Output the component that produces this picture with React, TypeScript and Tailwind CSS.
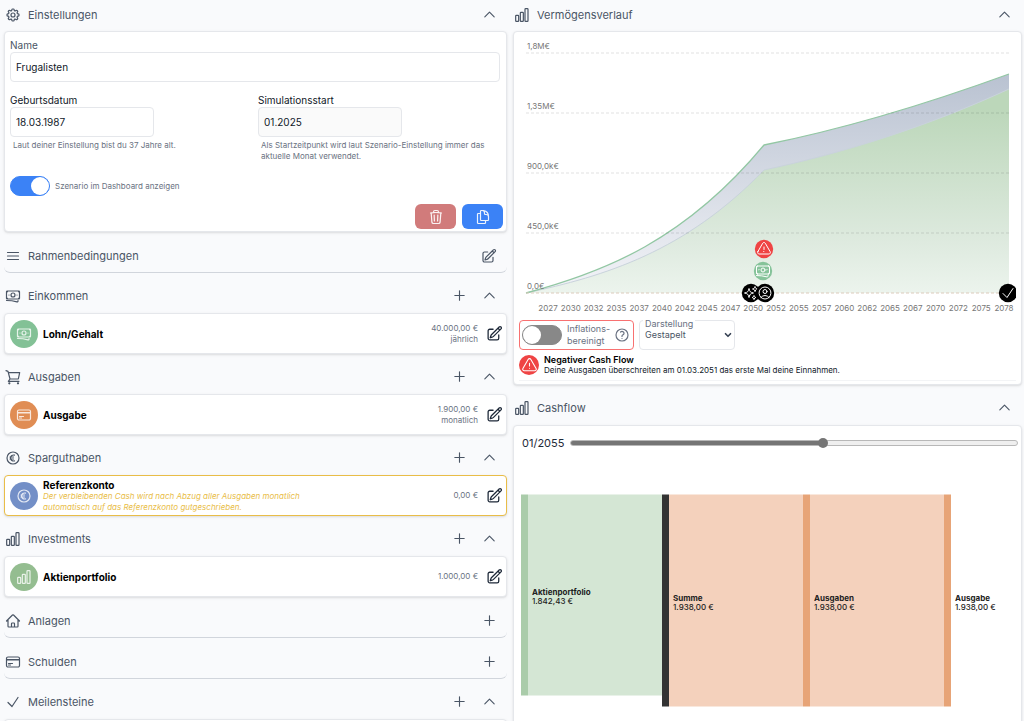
import type { ReactNode } from 'react'
import type { IconBaseProps, IconType } from 'react-icons'
import {
  HiOutlineBanknotes, HiOutlineBars3, HiOutlineCheck, HiOutlineChevronUp, HiOutlineCog8Tooth,
  HiOutlineCreditCard, HiOutlineCurrencyEuro, HiOutlineDocumentDuplicate, HiOutlineExclamationTriangle, HiOutlineHome,
  HiOutlinePencilSquare, HiOutlinePlus, HiOutlineQuestionMarkCircle, HiOutlineSparkles,
  HiOutlineTrash, HiOutlineUserCircle,
} from 'react-icons/hi2'
import { ChevronDown } from 'lucide-react'

const years = [
  2027, 2030, 2032, 2035, 2037, 2040, 2042, 2045, 2047, 2050, 2052,
  2055, 2057, 2060, 2062, 2065, 2067, 2070, 2072, 2075, 2078,
]

const gridLines = [
  { label: '1,8M€', y: 21 },
  { label: '1,35M€', y: 81 },
  { label: '900,0k€', y: 141 },
  { label: '450,0k€', y: 201 },
  { label: '0,0€', y: 261 },
]

const totalLine = 'M7 261 C86 240 166 208 245 113 C320 98 405 73 490 42'
const stockLine = 'M7 261 C86 244 166 220 245 138 C325 121 410 94 490 57'

const milestones = [
  { icon: HiOutlineExclamationTriangle, x: 245, y: 217, fill: '#ef4444' },
  { icon: HiOutlineBanknotes, x: 244, y: 239, fill: '#86c39a' },
  { icon: HiOutlineSparkles, x: 232, y: 261, fill: '#000000' },
  { icon: HiOutlineUserCircle, x: 246, y: 261, fill: '#000000' },
  { icon: HiOutlineCheck, x: 489, y: 261, fill: '#000000' },
]

const cashflowNodes = [
  { name: 'Aktienportfolio', value: '1.842,43 €', x: 2, height: 201, color: '#aaccaa', link: '#d4e6d4' },
  { name: 'Summe', value: '1.938,00 €', x: 143, height: 212, color: '#333333', link: '#f4d1bc' },
  { name: 'Ausgaben', value: '1.938,00 €', x: 284, height: 212, color: '#e7a477', link: '#f4d1bc' },
  { name: 'Ausgabe', value: '1.938,00 €', x: 425, height: 212, color: '#e7a477', link: null },
]

function ChartBars({ size = 16, strokeWidth = 1.8, className }: IconBaseProps) {
  return (
    <svg viewBox="0 0 24 24" width={size} height={size} fill="none" stroke="currentColor" strokeWidth={strokeWidth} className={className} aria-hidden="true">
      <rect x="2.5" y="12.5" width="4.5" height="9" rx="1" />
      <rect x="9.5" y="8" width="4.5" height="13.5" rx="1" />
      <rect x="16.5" y="2.5" width="4.5" height="19" rx="1" />
    </svg>
  )
}

function Cart({ size = 16, strokeWidth = 1.8, className }: IconBaseProps) {
  return (
    <svg
      viewBox="0 0 24 24" width={size} height={size} fill="none" stroke="currentColor" strokeWidth={strokeWidth}
      strokeLinecap="round" strokeLinejoin="round" className={className} aria-hidden="true"
    >
      <path d="M1.5 2.5 4.5 3.5 7.5 15H20l2-9.5H5M7.5 15 5 18.5h16" />
      <circle cx="6.5" cy="21.5" r="0.8" fill="currentColor" />
      <circle cx="19.5" cy="21.5" r="0.8" fill="currentColor" />
    </svg>
  )
}

type SectionProps = {
  icon: IconType
  title: string
  first?: boolean
  add?: boolean
  edit?: boolean
  children?: ReactNode
}

function Section({ icon: Icon, title, first, add, edit, children }: SectionProps) {
  return (
    <section>
      <div
        className={`flex items-center pl-px pr-2.5 text-gray-600 ${first ? 'h-[31px] pb-0.5' : children ? 'h-[33px] pb-0.5' : 'h-[34px] rounded-md border-b border-gray-300'}`}
      >
        <Icon size={16} strokeWidth={1.8} className="shrink-0" />
        <h2 className="ml-[7px] flex-1 pt-0.5 text-[11px]">{title}</h2>
        <div className="flex items-center gap-[15px]">
          {add && <button type="button" aria-label={`${title} hinzufügen`}><HiOutlinePlus size={15} strokeWidth={1.8} /></button>}
          {edit && <button type="button" aria-label={`${title} bearbeiten`}><HiOutlinePencilSquare size={16} strokeWidth={1.8} /></button>}
          {children && <button type="button" aria-label={`${title} einklappen`}><HiOutlineChevronUp size={15} strokeWidth={1.8} /></button>}
        </div>
      </div>
      {children}
    </section>
  )
}

type ItemProps = {
  icon: IconType
  circle: string
  title: string
  note?: string
  amount: string
  interval?: string
}

function Item({ icon: Icon, circle, title, note, amount, interval }: ItemProps) {
  return (
    <div
      className={`flex h-[41px] items-center rounded border bg-white pl-[5px] pr-[3px] shadow ${note ? 'border-[#e9bd48]' : 'border-gray-200'}`}
    >
      <span className={`flex size-7 shrink-0 items-center justify-center rounded-full text-white/80 ${circle}`}>
        <Icon size={16} strokeWidth={1.8} />
      </span>
      <div className="ml-[5px] flex-1">
        <h3 className="text-[10px] leading-3 font-bold text-black">{title}</h3>
        {note && <p className="max-w-72 text-[8px] leading-[11px] text-[#e9bd48] italic">{note}</p>}
      </div>
      <div className="mr-2 text-right text-[8px] leading-[11px] text-gray-500">
        <p>{amount}</p>
        {interval && <p>{interval}</p>}
      </div>
      <button type="button" aria-label={`${title} bearbeiten`} className="text-gray-800">
        <HiOutlinePencilSquare size={17} strokeWidth={1.8} />
      </button>
    </div>
  )
}

function Switch({ id, checked }: { id: string; checked?: boolean }) {
  return (
    <input
      id={id}
      type="checkbox"
      role="switch"
      defaultChecked={checked}
      className="h-5 w-10 shrink-0 appearance-none rounded-full border border-[#888888] bg-[#888888] before:block before:size-[18px] before:rounded-full before:bg-white checked:border-[#3b82f6] checked:bg-[#3b82f6] checked:before:ml-5"
    />
  )
}

function SettingsForm() {
  const inputClass = 'block h-[30px] rounded border border-gray-200 px-[5px] text-[10px] text-gray-900'
  return (
    <form className="rounded border border-gray-200 bg-white pt-1.5 pb-0.5 pl-[5px] text-[10px] text-gray-900 shadow">
      <label htmlFor="name" className="block leading-[14px] text-gray-600">Name</label>
      <div className="pr-1.5">
        <input id="name" defaultValue="Frugalisten" className={`${inputClass} w-full bg-white`} />
      </div>
      <div className="mt-[11px] grid grid-cols-2">
        <div>
          <label htmlFor="birthday" className="block leading-[14px]">Geburtsdatum</label>
          <input id="birthday" defaultValue="18.03.1987" className={`${inputClass} w-36 bg-white`} />
          <p className="mt-[3px] ml-[3px] text-[8px] leading-[11px] text-gray-500">Laut deiner Einstellung bist du 37 Jahre alt.</p>
        </div>
        <div>
          <label htmlFor="start" className="block leading-[14px]">Simulationsstart</label>
          <input id="start" readOnly defaultValue="01.2025" className={`${inputClass} w-36 bg-neutral-50`} />
          <p className="mt-[3px] mr-2 ml-[3px] text-[8px] leading-[11px] text-gray-500">
            Als Startzeitpunkt wird laut Szenario-Einstellung immer das aktuelle Monat verwendet.
          </p>
        </div>
      </div>
      <div className="mt-3.5 flex items-center gap-[5px]">
        <Switch id="dashboard" checked />
        <label htmlFor="dashboard" className="text-[8px] text-gray-500">Szenario im Dashboard anzeigen</label>
      </div>
      <div className="mt-2 flex justify-end gap-1.5 pr-[3px] text-white/90">
        <button type="button" aria-label="Löschen" className="flex h-[25px] w-[41px] items-center justify-center rounded-md bg-[#d17b7b]">
          <HiOutlineTrash size={16} strokeWidth={1.8} />
        </button>
        <button type="button" aria-label="Duplizieren" className="flex h-[25px] w-[41px] items-center justify-center rounded-md bg-[#3b82f6]">
          <HiOutlineDocumentDuplicate size={16} strokeWidth={1.8} />
        </button>
      </div>
    </form>
  )
}

function WealthChart() {
  return (
    <svg viewBox="0 0 497 288" className="block w-full" role="img" aria-label="Vermögensverlauf">
      <defs>
        <linearGradient id="cash" x1="0" y1="0" x2="0" y2="1">
          <stop offset="0" stopColor="#b9c2d1" />
          <stop offset="1" stopColor="#f3f4f8" />
        </linearGradient>
        <linearGradient id="stock" x1="0" y1="0" x2="0" y2="1">
          <stop offset="0.1" stopColor="#bcd7ba" />
          <stop offset="0.75" stopColor="#deeadf" />
          <stop offset="1" stopColor="#ecf4ed" />
        </linearGradient>
      </defs>
      <path d={`${totalLine} V261 Z`} fill="url(#cash)" />
      <path d={`${stockLine} V261 Z`} fill="url(#stock)" />
      <path d={stockLine} fill="none" stroke="#c9d3dc" />
      <path d={totalLine} fill="none" stroke="#92c7a3" strokeWidth="1.3" />
      {gridLines.map((line) => (
        <g key={line.label}>
          <line x1="7" x2="490" y1={line.y} y2={line.y} stroke={line.y === 261 ? '#dccbbb' : '#000000'} strokeOpacity={line.y === 261 ? 1 : 0.12} strokeDasharray="3 2" />
          <text x="8" y={line.y - 4} fontSize="8" fill="#777777">{line.label}</text>
        </g>
      ))}
      {years.map((year, i) => (
        <text key={year} x={29 + i * 22.8} y="279" fontSize="8" textAnchor="middle" fill="#777777">{year}</text>
      ))}
      {milestones.map(({ icon: Icon, x, y, fill }) => (
        <g key={`${x}-${y}`} color="#ffffff">
          <circle cx={x} cy={y} r="9.2" fill={fill} />
          <Icon x={x - 8} y={y - 8} size={16} />
        </g>
      ))}
    </svg>
  )
}

function Cashflow() {
  return (
    <svg viewBox="0 0 497 270" className="block w-full" role="img" aria-label="Cashflow">
      {cashflowNodes.map((node) => (
        <g key={node.name}>
          {node.link && <rect x={node.x + 7} y="34.5" width="134" height={node.height} fill={node.link} />}
          <rect x={node.x} y="34.5" width="7" height={node.height} fill={node.color} />
          <text x={node.x + 11} y={34.5 + node.height / 2} fontSize="8" fill="#222222">
            <tspan fontWeight="700">{node.name}</tspan>
            <tspan x={node.x + 11} dy="9" fontWeight="500">{node.value}</tspan>
          </text>
        </g>
      ))}
    </svg>
  )
}

export default function App() {
  return (
    <main className="grid h-screen grid-cols-2 overflow-hidden bg-[#f9fafc] font-['Inter',sans-serif]">
      <div className="flex flex-col gap-[7px] pr-[5px] pl-1">
        <Section first icon={HiOutlineCog8Tooth} title="Einstellungen">
          <SettingsForm />
        </Section>
        <Section icon={HiOutlineBars3} title="Rahmenbedingungen" edit />
        <Section icon={HiOutlineBanknotes} title="Einkommen" add>
          <Item icon={HiOutlineBanknotes} circle="bg-[#83c196]" title="Lohn/Gehalt" amount="40.000,00 €" interval="jährlich" />
        </Section>
        <Section icon={Cart} title="Ausgaben" add>
          <Item icon={HiOutlineCreditCard} circle="bg-[#e08d54]" title="Ausgabe" amount="1.900,00 €" interval="monatlich" />
        </Section>
        <Section icon={HiOutlineCurrencyEuro} title="Sparguthaben" add>
          <Item
            icon={HiOutlineCurrencyEuro}
            circle="bg-[#738fc7]"
            title="Referenzkonto"
            note="Der verbleibenden Cash wird nach Abzug aller Ausgaben monatlich automatisch auf das Referenzkonto gutgeschrieben."
            amount="0,00 €"
          />
        </Section>
        <Section icon={ChartBars} title="Investments" add>
          <Item icon={ChartBars} circle="bg-[#94bd90]" title="Aktienportfolio" amount="1.000,00 €" />
        </Section>
        <Section icon={HiOutlineHome} title="Anlagen" add />
        <Section icon={HiOutlineCreditCard} title="Schulden" add />
        <Section icon={HiOutlineCheck} title="Meilensteine" add>
          <div className="h-10 rounded border border-gray-200 bg-white shadow" />
        </Section>
      </div>

      <div className="flex flex-col gap-[7px] pr-0.5 pl-px">
        <Section first icon={ChartBars} title="Vermögensverlauf">
          <div className="rounded border border-gray-200 bg-white px-[5px] pb-[3px] shadow">
            <WealthChart />
            <div className="flex gap-[5px] text-[9px] text-gray-500">
              <div className="flex h-[30px] items-center rounded border border-[#f87171] pr-[3px] pl-0.5">
                <Switch id="inflation" />
                <label htmlFor="inflation" className="ml-[5px] w-[47px] leading-3">Inflations-<br />bereinigt</label>
                <button type="button" aria-label="Hilfe"><HiOutlineQuestionMarkCircle size={16} strokeWidth={1.8} /></button>
              </div>
              <div className="relative">
                <label htmlFor="view" className="absolute -top-0.5 left-1 bg-white px-0.5 leading-3">Darstellung</label>
                <select id="view" className="h-[30px] w-24 appearance-none rounded border border-gray-200 bg-white pl-[5px] text-gray-600">
                  <option>Gestapelt</option>
                </select>
                <ChevronDown size={10} strokeWidth={4} className="pointer-events-none absolute top-2.5 right-0.5 text-gray-700" />
              </div>
            </div>
            <div className="mt-1 flex items-center gap-[5px] border-b border-gray-100 pb-1 text-[8px] leading-[11px] text-gray-900">
              <span className="flex size-5 items-center justify-center rounded-full bg-[#ef4444] text-white"><HiOutlineExclamationTriangle size={17} /></span>
              <div>
                <p className="text-[9px] font-semibold text-black">Negativer Cash Flow</p>
                <p>Deine Ausgaben überschreiten am 01.03.2051 das erste Mal deine Einnahmen.</p>
              </div>
            </div>
          </div>
        </Section>
        <Section icon={ChartBars} title="Cashflow">
          <div className="rounded border border-gray-200 bg-white shadow">
            <div className="flex h-[34px] items-center gap-1.5 pr-[3px] pl-2 text-[11px] text-gray-800">
              <label htmlFor="month">01/2055</label>
              <input
                id="month"
                type="range"
                min="0"
                max="1000"
                defaultValue="565"
                className="h-1.5 flex-1 appearance-none rounded-full border border-[#b8b8b8] bg-linear-to-r from-[#757575] from-56% to-[#efefef] to-56% [&::-webkit-slider-thumb]:size-2.5 [&::-webkit-slider-thumb]:appearance-none [&::-webkit-slider-thumb]:rounded-full [&::-webkit-slider-thumb]:bg-[#757575]"
              />
            </div>
            <div className="px-[5px]">
              <Cashflow />
            </div>
          </div>
        </Section>
      </div>
    </main>
  )
}
